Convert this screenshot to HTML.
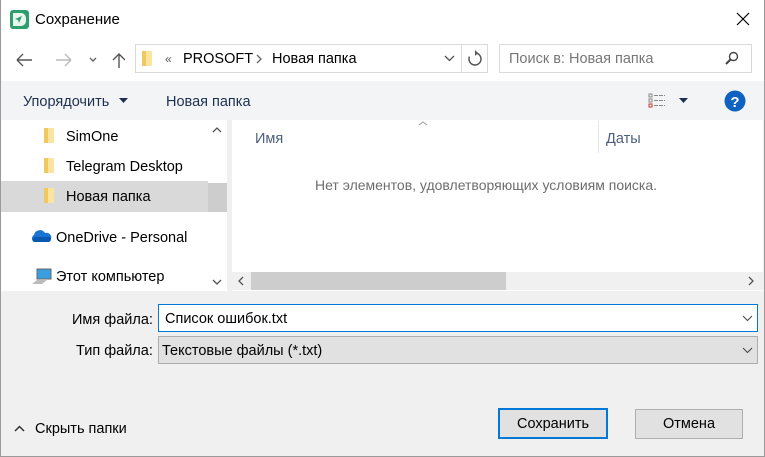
<!DOCTYPE html>
<html><head><meta charset="utf-8"><style>
*{box-sizing:border-box;margin:0;padding:0}
body{width:765px;height:457px;position:relative;overflow:hidden;font-family:"Liberation Sans",sans-serif;font-size:14.5px;color:#000;background:#f0f0f0}
.a{position:absolute}
.t{white-space:nowrap;padding-top:2px}
.frame{position:absolute;left:0;top:0;width:765px;height:457px;border:1px solid #9a9a9a;border-top:none;pointer-events:none}
.fold{position:absolute;width:10px;height:15px;background:#fbe3a0;border-radius:1px}
.fold:before{content:"";position:absolute;left:0;top:0;width:4px;height:15px;background:#f0c860}
</style></head><body>
<div class="a" style="left:0;top:0;width:765px;height:81px;background:#fff"></div>
<svg class="a" style="left:10px;top:10px" width="19" height="19" viewBox="0 0 19 19"><rect width="19" height="19" rx="3" fill="#2e9e6e"/><path d="M3 3h8a5 5 0 0 1 5 5v3a5 5 0 0 1-5 5H3z" fill="#e8f6ee"/><path d="M12 6 5 9l3 1 1 3z" fill="#2e9e6e"/></svg>
<div class="a t" style="left:35px;top:9px;font-size:15px">Сохранение</div>
<svg class="a" style="left:736px;top:12px" width="14" height="14"><path d="M1 1l12 12M13 1 1 13" stroke="#000" stroke-width="1.2"/></svg>
<svg class="a" style="left:15px;top:51px" width="110" height="18"><path d="M2 9h15M2 9l6-6M2 9l6 6" stroke="#555" stroke-width="1.4" fill="none"/><path d="M41 9h15M56 9l-6-6M56 9l-6 6" stroke="#bbb" stroke-width="1.4" fill="none"/><path d="M75 7l3 3 3-3" stroke="#666" stroke-width="1.4" fill="none"/><path d="M104 3v14M98 9l6-6 6 6" stroke="#555" stroke-width="1.4" fill="none"/></svg>
<div class="a" style="left:135px;top:44px;width:353px;height:29px;border:1px solid #d9d9d9"></div>
<div class="a" style="left:461px;top:45px;width:1px;height:27px;background:#d9d9d9"></div>
<div class="fold" style="left:142px;top:51px"></div>
<div class="a t" style="left:165px;top:50px;font-size:12px;color:#555">«</div>
<div class="a t" style="left:183px;top:49px">PROSOFT</div>
<svg class="a" style="left:255px;top:54px" width="8" height="10"><path d="M2 1l4 4-4 4" stroke="#666" stroke-width="1.3" fill="none"/></svg>
<div class="a t" style="left:272px;top:49px">Новая папка</div>
<svg class="a" style="left:444px;top:55px" width="11" height="8"><path d="M1 1l4.5 4.5L10 1" stroke="#555" stroke-width="1.3" fill="none"/></svg>
<svg class="a" style="left:466px;top:50px" width="18" height="18"><path d="M9 3a6 6 0 1 1-5.5 3.6" stroke="#555" stroke-width="1.5" fill="none"/><path d="M9 0v6l3-3z" fill="#555"/></svg>
<div class="a" style="left:499px;top:44px;width:253px;height:29px;border:1px solid #d9d9d9"></div>
<div class="a t" style="left:509px;top:49px;color:#777">Поиск в: Новая папка</div>
<svg class="a" style="left:725px;top:51px" width="14" height="14"><circle cx="8.5" cy="5.5" r="4" stroke="#444" stroke-width="1.4" fill="none"/><path d="M5.5 8.5 1 13" stroke="#444" stroke-width="2"/></svg>
<div class="a" style="left:0;top:81px;width:765px;height:39px;background:#f3f4f6"></div>
<div class="a t" style="left:23px;top:92px;color:#1e3050">Упорядочить</div>
<svg class="a" style="left:119px;top:98px" width="9" height="5"><path d="M0 0h9L4.5 5z" fill="#1e3050"/></svg>
<div class="a t" style="left:166px;top:92px;color:#1e3050">Новая папка</div>
<svg class="a" style="left:648px;top:93px" width="18" height="16"><g fill="none" stroke="#888"><rect x="1" y="1" width="3" height="3"/><rect x="1" y="6" width="3" height="3"/><rect x="1" y="11" width="3" height="3" stroke="#c33"/><path d="M6 2.5h11M6 7.5h11M6 12.5h11" stroke-dasharray="4 1"/></g></svg>
<svg class="a" style="left:679px;top:98px" width="9" height="5"><path d="M0 0h9L4.5 5z" fill="#1e3050"/></svg>
<svg class="a" style="left:724px;top:90px" width="22" height="22"><circle cx="11" cy="11" r="10.5" fill="#0f62c0"/><text x="11" y="17" text-anchor="middle" font-family="Liberation Sans" font-weight="bold" font-size="15" fill="#fff">?</text></svg>
<div class="a" style="left:0;top:120px;width:227px;height:171px;background:#fff"></div>
<div class="a" style="left:0;top:181px;width:208px;height:31px;background:#d9d9d9"></div>
<div class="fold" style="left:44px;top:128px"></div>
<div class="a t" style="left:66px;top:127px">SimOne</div>
<div class="fold" style="left:44px;top:158px"></div>
<div class="a t" style="left:66px;top:157px">Telegram Desktop</div>
<div class="fold" style="left:44px;top:188px"></div>
<div class="a t" style="left:66px;top:187px">Новая папка</div>
<svg class="a" style="left:30px;top:229px" width="22" height="14"><path d="M4 13a4 4 0 0 1 0-7 6 6 0 0 1 11-2 4.5 4.5 0 0 1 3 9z" fill="#1a73d0"/><path d="M4 13a3 3 0 0 1 1-5h15a3 3 0 0 1-1 5z" fill="#0a58b0"/></svg>
<div class="a t" style="left:56px;top:228px">OneDrive - Personal</div>
<svg class="a" style="left:31px;top:268px" width="22" height="18"><rect x="6" y="1" width="14" height="10" fill="#3a9ee0" stroke="#666"/><path d="M1 16l5-4h10l-5 4z" fill="#bbb"/></svg>
<div class="a t" style="left:56px;top:267px">Этот компьютер</div>
<div class="a" style="left:208px;top:183px;width:19px;height:29px;background:#cdcdcd"></div>
<svg class="a" style="left:212px;top:127px" width="10" height="6"><path d="M1 5l4-4 4 4" stroke="#555" stroke-width="1.3" fill="none"/></svg>
<svg class="a" style="left:212px;top:279px" width="10" height="6"><path d="M1 1l4 4 4-4" stroke="#555" stroke-width="1.3" fill="none"/></svg>
<div class="a" style="left:232px;top:120px;width:531px;height:171px;background:#fff"></div>
<svg class="a" style="left:418px;top:121px" width="10" height="5"><path d="M1 4l4-3 4 3" stroke="#999" fill="none"/></svg>
<div class="a t" style="left:255px;top:129px;color:#4c607a">Имя</div>
<div class="a" style="left:598px;top:121px;width:1px;height:32px;background:#e5e5e5"></div>
<div class="a t" style="left:606px;top:129px;color:#4c607a">Даты</div>
<div class="a t" style="left:315px;top:175px;color:#6d6d6d;font-size:14px">Нет элементов, удовлетворяющих условиям поиска.</div>
<div class="a" style="left:232px;top:272px;width:531px;height:18px;background:#f0f0f0"></div>
<div class="a" style="left:251px;top:272px;width:255px;height:18px;background:#cdcdcd"></div>
<svg class="a" style="left:238px;top:276px" width="6" height="10"><path d="M5 1 1 5l4 4" stroke="#555" stroke-width="1.3" fill="none"/></svg>
<svg class="a" style="left:748px;top:276px" width="6" height="10"><path d="M1 1l4 4-4 4" stroke="#555" stroke-width="1.3" fill="none"/></svg>
<div class="a t" style="left:72px;top:310px">Имя файла:</div>
<div class="a" style="left:158px;top:304px;width:600px;height:28px;background:#fff;border:1px solid #0078d7"></div>
<div class="a t" style="left:165px;top:309px">Список ошибок.txt</div>
<svg class="a" style="left:742px;top:315px" width="11" height="7"><path d="M1 1l4.5 4.5L10 1" stroke="#444" fill="none"/></svg>
<div class="a t" style="left:76px;top:341px">Тип файла:</div>
<div class="a" style="left:158px;top:336px;width:600px;height:28px;background:#e1e1e1;border:1px solid #adadad"></div>
<div class="a t" style="left:162px;top:341px">Текстовые файлы (*.txt)</div>
<svg class="a" style="left:742px;top:347px" width="11" height="7"><path d="M1 1l4.5 4.5L10 1" stroke="#444" fill="none"/></svg>
<svg class="a" style="left:14px;top:425px" width="11" height="7"><path d="M1 6l4.5-4.5L10 6" stroke="#333" stroke-width="1.5" fill="none"/></svg>
<div class="a t" style="left:35px;top:419px">Скрыть папки</div>
<div class="a" style="left:498px;top:408px;width:110px;height:31px;background:#e1e1e1;border:2px solid #0078d7"></div>
<div class="a t" style="left:498px;top:414px;width:110px;text-align:center">Сохранить</div>
<div class="a" style="left:635px;top:409px;width:108px;height:30px;background:#e1e1e1;border:1px solid #adadad"></div>
<div class="a t" style="left:635px;top:414px;width:108px;text-align:center">Отмена</div>
<div class="frame"></div>
</body></html>
